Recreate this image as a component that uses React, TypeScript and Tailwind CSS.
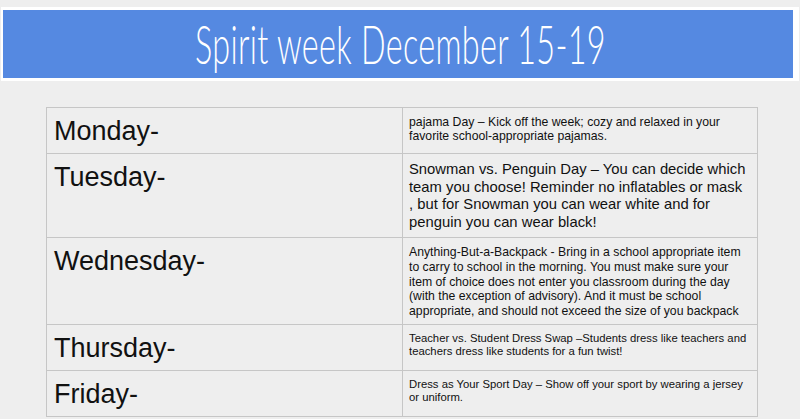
import React from "react";

const rows = [
  {
    day: "Monday-",
    h: "h-[46px]",
    text: "pajama Day – Kick off the week; cozy and relaxed in your favorite school-appropriate pajamas.",
    tc: "text-[12.25px] leading-[14px] pr-[6px]",
  },
  {
    day: "Tuesday-",
    h: "h-[84px]",
    text: "Snowman vs. Penguin Day – You can decide which team you choose! Reminder no inflatables or mask , but for Snowman you can wear white and for penguin you can wear black!",
    tc: "text-[14.8px] leading-[17.6px] pr-[9px]",
  },
  {
    day: "Wednesday-",
    h: "h-[87px]",
    text: "Anything-But-a-Backpack - Bring in a school appropriate item to carry to school in the morning. You must make sure your item of choice does not enter you classroom during the day (with the exception of advisory). And it must be school appropriate, and should not exceed the size of you backpack",
    tc: "text-[12.25px] leading-[14.75px] pr-[6px]",
  },
  {
    day: "Thursday-",
    h: "h-[46px]",
    text: "Teacher vs. Student Dress Swap –Students dress like teachers and teachers dress like students for a fun twist!",
    tc: "text-[11.3px] leading-[13px] pr-[6px]",
  },
  {
    day: "Friday-",
    h: "h-[46px]",
    text: "Dress as Your Sport Day – Show off your sport by wearing a jersey or uniform.",
    tc: "text-[11.3px] leading-[13px] pr-[6px]",
  },
];

export default function App() {
  return (
    <div className="h-[419px] w-full overflow-hidden bg-[#eeeeee] pt-[7px] font-['Liberation_Sans',Arial,sans-serif] text-[#111]">
      <div className="ml-[1px] mr-[1px] bg-white py-[3px] pl-[2px] pr-[6px]">
        <div className="flex h-[68px] items-center justify-center bg-[#5589e1] pl-[4px]">
          <span className="inline-block origin-center scale-x-[0.6] font-['Lato','Open_Sans',sans-serif] text-[54px] font-light leading-none tracking-[0.5px] text-white">
            Spirit week December 15-19
          </span>
        </div>
      </div>
      <div className="ml-[46px] mt-[26px] grid w-[712px] grid-cols-[356px_355px] border-l border-t border-[#c6c6c6]">
        {rows.map((r) => (
          <React.Fragment key={r.day}>
            <div className={`${r.h} border-b border-r border-[#c6c6c6] pl-[7px] pt-[8px] text-[27px] leading-[30px]`}>
              {r.day}
            </div>
            <div className={`${r.h} border-b border-r border-[#c6c6c6] pl-[6px] pt-[7px] ${r.tc}`}>
              {r.text}
            </div>
          </React.Fragment>
        ))}
      </div>
    </div>
  );
}
